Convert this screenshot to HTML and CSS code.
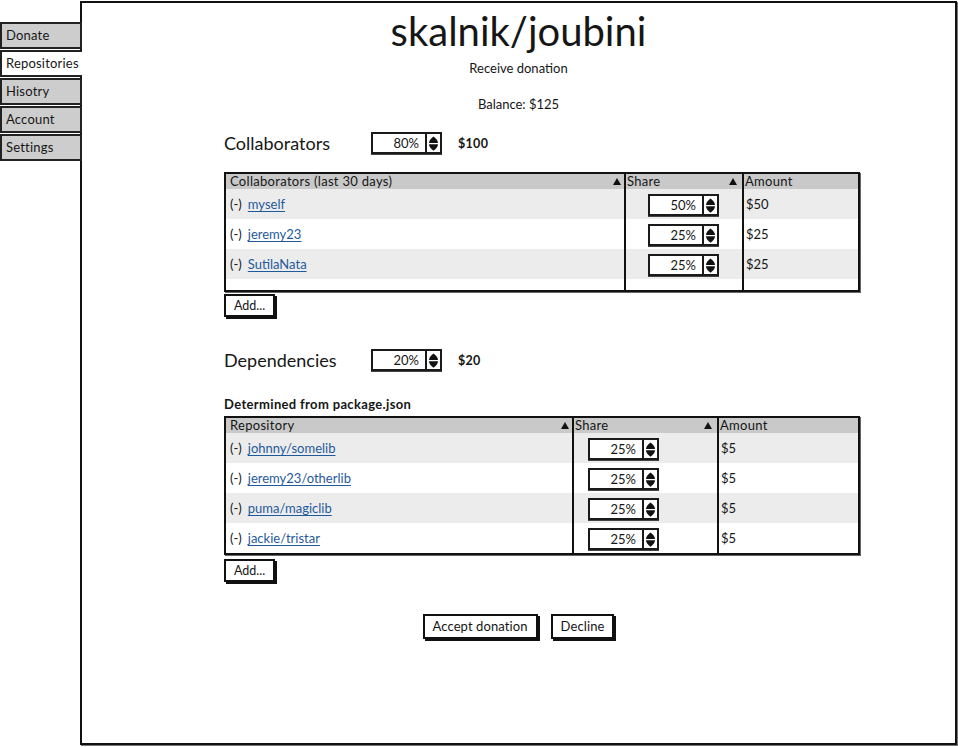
FILE: index.html
```html
<!DOCTYPE html>
<html>
<head>
<meta charset="utf-8">
<link rel="stylesheet" href="styles.css">
</head>
<body>
<div class="app">
  <nav class="tabs">
    <div class="tab">Donate</div>
    <div class="tab active">Repositories</div>
    <div class="tab">Hisotry</div>
    <div class="tab">Account</div>
    <div class="tab">Settings</div>
  </nav>
  <main class="panel">
    <h1 class="title">skalnik/joubini</h1>
    <p class="subtitle">Receive donation</p>
    <p class="balance">Balance: $125</p>

    <section class="section">
      <div class="section-head">
        <h2 class="heading">Collaborators</h2>
        <div class="spinner"><span class="spin-val">80%</span><span class="spin-btn"><svg viewBox="0 0 11 17" width="11" height="17"><path d="M5.5 1.5C8 3.5 10 5.5 10 8H1C1 5.5 3 3.5 5.5 1.5Z"/><path d="M1 9.2H10C10 11.7 8 13.7 5.5 15.7C3 13.7 1 11.7 1 9.2Z"/></svg></span></div>
        <b class="sum">$100</b>
      </div>
      <div class="table t1">
        <div class="row head">
          <div class="cell c1">Collaborators (last 30 days)<span class="sort"></span></div>
          <div class="cell c2">Share<span class="sort"></span></div>
          <div class="cell c3">Amount</div>
        </div>
        <div class="row alt">
          <div class="cell c1">(-)<a href="#">myself</a></div>
          <div class="cell c2"><div class="spinner"><span class="spin-val">50%</span><span class="spin-btn"><svg viewBox="0 0 11 17" width="11" height="17"><path d="M5.5 1.5C8 3.5 10 5.5 10 8H1C1 5.5 3 3.5 5.5 1.5Z"/><path d="M1 9.2H10C10 11.7 8 13.7 5.5 15.7C3 13.7 1 11.7 1 9.2Z"/></svg></span></div></div>
          <div class="cell c3">$50</div>
        </div>
        <div class="row">
          <div class="cell c1">(-)<a href="#">jeremy23</a></div>
          <div class="cell c2"><div class="spinner"><span class="spin-val">25%</span><span class="spin-btn"><svg viewBox="0 0 11 17" width="11" height="17"><path d="M5.5 1.5C8 3.5 10 5.5 10 8H1C1 5.5 3 3.5 5.5 1.5Z"/><path d="M1 9.2H10C10 11.7 8 13.7 5.5 15.7C3 13.7 1 11.7 1 9.2Z"/></svg></span></div></div>
          <div class="cell c3">$25</div>
        </div>
        <div class="row alt">
          <div class="cell c1">(-)<a href="#">SutilaNata</a></div>
          <div class="cell c2"><div class="spinner"><span class="spin-val">25%</span><span class="spin-btn"><svg viewBox="0 0 11 17" width="11" height="17"><path d="M5.5 1.5C8 3.5 10 5.5 10 8H1C1 5.5 3 3.5 5.5 1.5Z"/><path d="M1 9.2H10C10 11.7 8 13.7 5.5 15.7C3 13.7 1 11.7 1 9.2Z"/></svg></span></div></div>
          <div class="cell c3">$25</div>
        </div>
        <div class="row filler">
          <div class="cell c1"></div>
          <div class="cell c2"></div>
          <div class="cell c3"></div>
        </div>
      </div>
      <button class="btn add add1">Add...</button>
    </section>

    <section class="section deps">
      <div class="section-head">
        <h2 class="heading">Dependencies</h2>
        <div class="spinner"><span class="spin-val">20%</span><span class="spin-btn"><svg viewBox="0 0 11 17" width="11" height="17"><path d="M5.5 1.5C8 3.5 10 5.5 10 8H1C1 5.5 3 3.5 5.5 1.5Z"/><path d="M1 9.2H10C10 11.7 8 13.7 5.5 15.7C3 13.7 1 11.7 1 9.2Z"/></svg></span></div>
        <b class="sum">$20</b>
      </div>
      <p class="note">Determined from package.json</p>
      <div class="table t2">
        <div class="row head">
          <div class="cell c1">Repository<span class="sort"></span></div>
          <div class="cell c2">Share<span class="sort"></span></div>
          <div class="cell c3">Amount</div>
        </div>
        <div class="row alt">
          <div class="cell c1">(-)<a href="#">johnny/somelib</a></div>
          <div class="cell c2"><div class="spinner"><span class="spin-val">25%</span><span class="spin-btn"><svg viewBox="0 0 11 17" width="11" height="17"><path d="M5.5 1.5C8 3.5 10 5.5 10 8H1C1 5.5 3 3.5 5.5 1.5Z"/><path d="M1 9.2H10C10 11.7 8 13.7 5.5 15.7C3 13.7 1 11.7 1 9.2Z"/></svg></span></div></div>
          <div class="cell c3">$5</div>
        </div>
        <div class="row">
          <div class="cell c1">(-)<a href="#">jeremy23/otherlib</a></div>
          <div class="cell c2"><div class="spinner"><span class="spin-val">25%</span><span class="spin-btn"><svg viewBox="0 0 11 17" width="11" height="17"><path d="M5.5 1.5C8 3.5 10 5.5 10 8H1C1 5.5 3 3.5 5.5 1.5Z"/><path d="M1 9.2H10C10 11.7 8 13.7 5.5 15.7C3 13.7 1 11.7 1 9.2Z"/></svg></span></div></div>
          <div class="cell c3">$5</div>
        </div>
        <div class="row alt">
          <div class="cell c1">(-)<a href="#">puma/magiclib</a></div>
          <div class="cell c2"><div class="spinner"><span class="spin-val">25%</span><span class="spin-btn"><svg viewBox="0 0 11 17" width="11" height="17"><path d="M5.5 1.5C8 3.5 10 5.5 10 8H1C1 5.5 3 3.5 5.5 1.5Z"/><path d="M1 9.2H10C10 11.7 8 13.7 5.5 15.7C3 13.7 1 11.7 1 9.2Z"/></svg></span></div></div>
          <div class="cell c3">$5</div>
        </div>
        <div class="row">
          <div class="cell c1">(-)<a href="#">jackie/tristar</a></div>
          <div class="cell c2"><div class="spinner"><span class="spin-val">25%</span><span class="spin-btn"><svg viewBox="0 0 11 17" width="11" height="17"><path d="M5.5 1.5C8 3.5 10 5.5 10 8H1C1 5.5 3 3.5 5.5 1.5Z"/><path d="M1 9.2H10C10 11.7 8 13.7 5.5 15.7C3 13.7 1 11.7 1 9.2Z"/></svg></span></div></div>
          <div class="cell c3">$5</div>
        </div>
      </div>
      <button class="btn add add2">Add...</button>
    </section>

    <div class="actions">
      <button class="btn">Accept donation</button>
      <button class="btn">Decline</button>
    </div>
  </main>
</div>
</body>
</html>
```

FILE: styles.css
```css
* { box-sizing: border-box; }

body {
  margin: 0;
  background: #fff;
  color: #161616;
  font-family: Lato, "Noto Sans", "Liberation Sans", sans-serif;
  font-size: 13px;
}

.app {
  display: flex;
  height: 747px;
}

.tabs {
  flex: none;
  width: 80px;
  padding-top: 22px;
  display: flex;
  flex-direction: column;
  gap: 1px;
  position: relative;
  z-index: 1;
}

.tab {
  width: 82px;
  height: 27px;
  border: 2px solid #222;
  background: #cdcdcd;
  font-size: 13px;
  letter-spacing: 0.2px;
  line-height: 23px;
  padding-left: 4px;
  white-space: nowrap;
}

.tab.active {
  background: #fff;
  border-right: none;
}

.panel {
  flex: none;
  width: 877px;
  height: 744px;
  margin-top: 1px;
  border: 2px solid #111;
  box-shadow: 1px 1px 0 #777;
  display: flex;
  flex-direction: column;
}

.title {
  margin: 8px 0 0;
  font-size: 40px;
  line-height: 40px;
  font-weight: 400;
  text-align: center;
}

.subtitle {
  margin: 9px 0 0;
  line-height: 16px;
  text-align: center;
}

.balance {
  margin: 20px 0 0;
  line-height: 16px;
  text-align: center;
}

.section {
  margin: 20px 0 0 142px;
  width: 636px;
}

.section.deps {
  margin-top: 32px;
}

.section-head {
  display: flex;
  align-items: center;
  height: 22px;
}

.heading {
  margin: 0;
  width: 147px;
  font-size: 18px;
  font-weight: 400;
}

.sum {
  margin-left: 16px;
  font-size: 12.5px;
  font-weight: 700;
  letter-spacing: 0.3px;
}

.spinner {
  display: flex;
  width: 71px;
  height: 22px;
  border: 2px solid #1a1a1a;
  background: #fff;
  box-shadow: 0 1px 0 #444;
}

.spin-val {
  flex: 1;
  text-align: right;
  padding-right: 6px;
  line-height: 18px;
  font-size: 13px;
}

.spin-btn {
  flex: none;
  width: 15px;
  border-left: 2px solid #1a1a1a;
  display: flex;
  align-items: center;
  justify-content: center;
}

.spin-btn svg path { fill: #111; }

.note {
  margin: 25px 0 0;
  line-height: 16px;
  font-size: 13px;
  font-weight: 700;
  letter-spacing: 0.35px;
}

.table {
  display: grid;
  margin-top: 18px;
  border: 2px solid #111;
  box-shadow: 1px 1px 0 #666;
  background: #fff;
}

.t1 {
  grid-template-columns: 398px 118px 1fr;
  grid-template-rows: 15px repeat(3, 30px) 11px;
}

.t2 {
  margin-top: 4px;
  grid-template-columns: 346px 145px 1fr;
  grid-template-rows: 15px repeat(4, 30px);
}

.row { display: contents; }

.cell {
  display: flex;
  align-items: center;
  white-space: nowrap;
  font-size: 13px;
}

.cell.c1 { padding-left: 4px; }
.cell.c2, .cell.c3 { border-left: 2px solid #111; }
.cell.c3 { padding-left: 2px; }

.row.alt .cell { background: #ececec; }

.row.head .cell {
  background: #c9c9c9;
  font-size: 13px;
  letter-spacing: 0.3px;
  line-height: 15px;
  justify-content: space-between;
}

.row.head .c1 { padding-right: 3px; }
.row.head .c2 { padding-left: 1px; padding-right: 5px; }
.row.head .c3 { padding-left: 1px; }

.sort {
  width: 0;
  height: 0;
  border-left: 4px solid transparent;
  border-right: 4px solid transparent;
  border-bottom: 7px solid #111;
}

.t1 .row:not(.head) .c2 { padding-left: 22px; padding-top: 2px; }
.t2 .row:not(.head) .c2 { padding-left: 14px; padding-top: 2px; }

a {
  margin-left: 6px;
  color: #1f5a9c;
  text-decoration: underline;
  text-underline-offset: 2px;
}

.btn {
  display: block;
  height: 23px;
  padding: 0 9px;
  border: 2px solid #111;
  background: #fff;
  box-shadow: 2px 2px 0 #111;
  font-family: inherit;
  font-size: 12.5px;
  color: #161616;
  line-height: 19px;
}

.add { padding: 0 8px; }
.add1 { margin-top: 2px; }
.add2 { margin-top: 4px; }

.actions {
  display: flex;
  justify-content: center;
  gap: 13px;
  margin-top: 32px;
}

.actions .btn {
  height: 25px;
  padding: 0 8px;
  font-size: 13px;
  letter-spacing: 0.1px;
}
```
